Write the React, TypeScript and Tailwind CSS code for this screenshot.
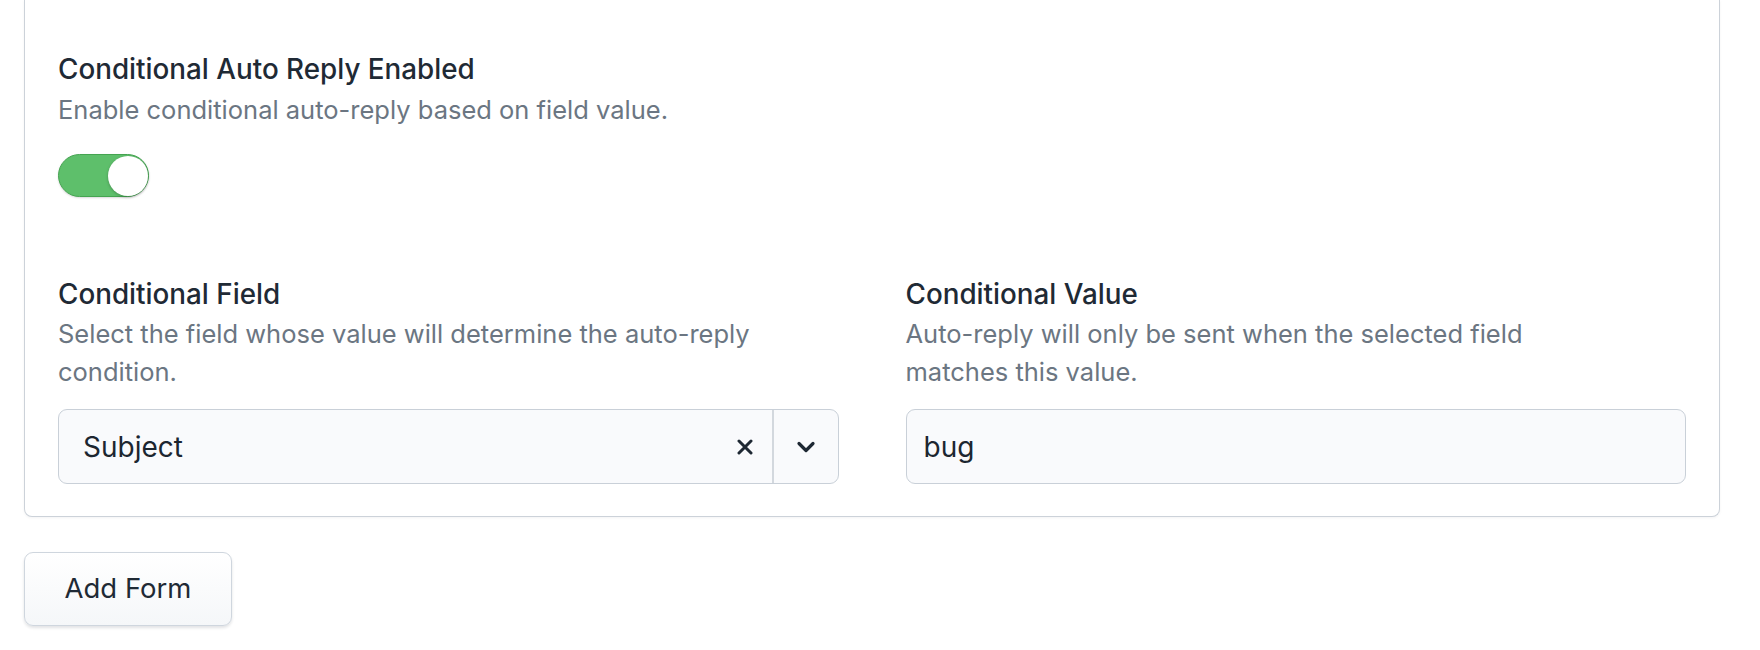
import React from "react";

function XIcon() {
  return (
    <svg width="16" height="16" viewBox="0 0 16 16" fill="none">
      <path d="M2 2 L14 14 M14 2 L2 14" stroke="#1e2833" strokeWidth="3" strokeLinecap="round" />
    </svg>
  );
}

function Chevron() {
  return (
    <svg width="20" height="14" viewBox="0 0 20 14" fill="none">
      <path d="M3 3.5 L10 10.5 L17 3.5" stroke="#1e2833" strokeWidth="3.2" strokeLinecap="round" strokeLinejoin="round" />
    </svg>
  );
}

export default function App() {
  return (
    <div
      className="w-[1760px] h-[650px] bg-white overflow-hidden pl-[24px]"
      style={{ fontFamily: "Inter, 'Noto Sans', sans-serif" }}
    >
      <div className="w-[1696px] bg-white border-[1.5px] border-t-0 border-[#ccd2d9] rounded-b-[8px] rounded-t-none px-[33px] pt-[51px] pb-[32px] shadow-[0_1px_3px_rgba(15,23,42,0.05)]">
        <div className="flex flex-col">
          <div className="text-[27.8px] leading-[36px] font-medium text-[#1f2a35]">
            Conditional Auto Reply Enabled
          </div>
          <div className="mt-[4px] text-[25.5px] leading-[38px] text-[#6b7682]">
            Enable conditional auto-reply based on field value.
          </div>
          <div className="mt-[25px] w-[91px] h-[43px] rounded-full bg-[#5ebf6b] border-[1.5px] border-[#45a451] flex items-center justify-end pr-[0.5px] shadow-[0_1px_2px_rgba(0,0,0,0.15)]">
            <div className="w-[40px] h-[40px] rounded-full bg-white shadow-[0_1px_3px_rgba(0,0,0,0.25)]" />
          </div>
        </div>

        <div className="mt-[79px] grid grid-cols-2 gap-x-[67px]">
          <div className="flex flex-col">
            <div className="text-[27.8px] leading-[36px] font-medium text-[#1f2a35]">Conditional Field</div>
            <div className="mt-[3px] text-[25.5px] leading-[38px] text-[#6b7682] max-w-[720px]">
              Select the field whose value will determine the auto-reply condition.
            </div>
            <div className="mt-[18px] h-[75px] flex items-stretch rounded-[9px] border-[1.5px] border-[#c9d0d8] bg-[#f9fafc]">
              <div className="flex-1 flex items-center pl-[24px] text-[28px] text-[#1c2630]">Subject</div>
              <div className="w-[54px] flex items-center justify-center">
                <XIcon />
              </div>
              <div className="w-[1.5px] bg-[#d3d8de]" />
              <div className="w-[64px] flex items-center justify-center">
                <Chevron />
              </div>
            </div>
          </div>
          <div className="flex flex-col">
            <div className="text-[27.8px] leading-[36px] font-medium text-[#1f2a35]">Conditional Value</div>
            <div className="mt-[3px] text-[25.5px] leading-[38px] text-[#6b7682] max-w-[720px]">
              Auto-reply will only be sent when the selected field matches this value.
            </div>
            <div className="mt-[18px] h-[75px] flex items-center rounded-[9px] border-[1.5px] border-[#c9d0d8] bg-[#f9fafc] pl-[17px] text-[28px] text-[#1c2630]">
              bug
            </div>
          </div>
        </div>
      </div>

      <button className="mt-[35px] w-[208px] h-[74px] rounded-[9px] border-[1.5px] border-[#cfd6de] bg-gradient-to-b from-white to-[#f5f7f9] shadow-[0_2px_3px_rgba(15,23,42,0.12)] text-[27.5px] font-normal text-[#1f2a35] flex items-center justify-center">
        Add Form
      </button>
    </div>
  );
}
